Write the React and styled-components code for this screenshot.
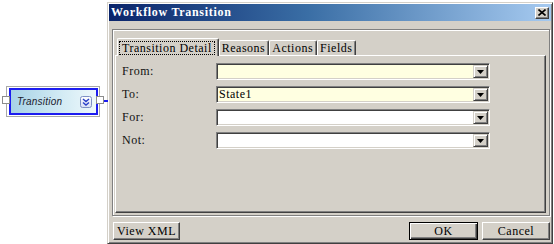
import React from "react";
import styled, { createGlobalStyle, css } from "styled-components";

const GlobalStyle = createGlobalStyle`
  html, body {
    margin: 0;
    padding: 0;
    background: #fff;
  }
  body {
    width: 554px;
    height: 244px;
    overflow: hidden;
    font-family: "Liberation Serif", "Times New Roman", serif;
    color: #000;
  }
`;

const uiText = css`
  font-family: "Liberation Serif", "Times New Roman", serif;
  font-size: 12px;
  letter-spacing: 0.5px;
`;

const Page = styled.div`
  display: flex;
  align-items: flex-start;
  width: 554px;
  height: 244px;
`;

/* ---------- workflow node on the canvas ---------- */

const NodeArea = styled.div`
  width: 107px;
  flex: none;
  box-sizing: border-box;
  padding: 86px 0 0 6px;
`;

const Node = styled.div`
  position: relative;
  width: 94px;
  height: 31px;
  box-sizing: border-box;
  border: 1px solid #a9a9a9;
  background: #fff;
  padding: 1px 1px 1px 2px;
`;

const NodeBody = styled.div`
  display: flex;
  align-items: center;
  justify-content: space-between;
  height: 100%;
  box-sizing: border-box;
  border: 2px solid #1c1cf0;
  background: linear-gradient(to right, #a7d2e6 0%, #d3ebf4 60%, #eef8fb 100%);
  padding: 0 4px 0 6px;
`;

const NodeLabel = styled.span`
  font-family: "Liberation Sans", Arial, sans-serif;
  font-style: italic;
  font-size: 10px;
  color: #1a1a2e;
  letter-spacing: 0.2px;
`;

const Port = styled.div`
  position: absolute;
  top: 9px;
  width: 6px;
  height: 6px;
  border: 1px solid #8c8c8c;
  background: #fff;
  ${(p) =>
    p.side === "left"
      ? css`
          left: -5px;
        `
      : css`
          right: -5px;
        `}
`;

const Wire = styled.div`
  position: absolute;
  top: 13px;
  right: -9px;
  width: 4px;
  height: 2px;
  background: #1c1cf0;
`;

const Expand = () => (
  <svg width="12" height="12" viewBox="0 0 12 12">
    <defs>
      <linearGradient id="exg" x1="0" y1="0" x2="0" y2="1">
        <stop offset="0" stopColor="#ffffff" />
        <stop offset="1" stopColor="#d8e0f4" />
      </linearGradient>
    </defs>
    <rect x="0.5" y="0.5" width="11" height="11" rx="2" fill="url(#exg)" stroke="#7d8fc4" />
    <path d="M3 3 L6 5.5 L9 3 M3 6.5 L6 9 L9 6.5" fill="none" stroke="#2a3fc8" strokeWidth="1.4" />
  </svg>
);

/* ---------- dialog window ---------- */

const Dialog = styled.div`
  margin-top: 2px;
  width: 446px;
  height: 242px;
  flex: none;
  box-sizing: border-box;
  background: #d4d0c8;
  border: 1px solid;
  border-color: #d4d0c8 #404040 #404040 #d4d0c8;
  box-shadow: inset 1px 1px #fff, inset -1px -1px #808080;
  padding: 1px;
  display: flex;
  flex-direction: column;
`;

const TitleBar = styled.div`
  height: 17px;
  flex: none;
  display: flex;
  align-items: center;
  justify-content: space-between;
  padding: 0 2px 0 2px;
  background: linear-gradient(to right, #0a246a 0%, #3a6ea5 45%, #a6caf0 100%);
`;

const Title = styled.span`
  ${uiText};
  color: #fff;
  font-weight: bold;
  letter-spacing: 0.7px;
  line-height: 17px;
`;

const CloseButton = styled.div`
  width: 14px;
  height: 12px;
  box-sizing: border-box;
  display: flex;
  align-items: center;
  justify-content: center;
  background: #d4d0c8;
  border: 1px solid;
  border-color: #fff #404040 #404040 #fff;
  box-shadow: inset -1px -1px #808080;
`;

const GroupBox = styled.div`
  flex: 1;
  margin: 8px 1px 0 3px;
  box-sizing: border-box;
  border: 1px solid #808080;
  box-shadow: inset 1px 1px #fff, 1px 1px #fff;
  padding: 8px 3px 2px 2px;
  display: flex;
  flex-direction: column;
`;

const TabRow = styled.div`
  display: flex;
  align-items: flex-end;
  height: 17px;
  padding-left: 2px;
  position: relative;
  z-index: 1;
`;

const Tab = styled.div`
  ${uiText};
  box-sizing: border-box;
  white-space: nowrap;
  display: flex;
  align-items: center;
  background: #d4d0c8;
  border-top: 1px solid #fff;
  border-left: 1px solid #fff;
  border-right: 1px solid #404040;
  box-shadow: inset -1px 0 #808080;
  border-radius: 2px 2px 0 0;
  ${(p) =>
    p.active
      ? css`
          height: 18px;
          margin-bottom: -1px;
          padding: 0 4px 0 2px;
        `
      : css`
          height: 15px;
          padding: 0 3px 0 2px;
        `}
`;

const Focus = styled.span`
  outline: 1px dotted #000;
  outline-offset: 0;
  padding: 0 2px 0 2px;
  line-height: 12px;
`;

const TabPanel = styled.div`
  flex: 1;
  box-sizing: border-box;
  border: 1px solid;
  border-color: #fff #404040 #404040 #fff;
  box-shadow: inset -1px -1px #808080;
  padding: 7px 0 0 6px;
`;

const Form = styled.div`
  display: grid;
  grid-template-columns: 94px 274px;
  row-gap: 6px;
  align-items: center;
`;

const Label = styled.span`
  ${uiText};
  color: #111;
`;

const Combo = styled.div`
  height: 17px;
  box-sizing: border-box;
  display: flex;
  align-items: stretch;
  border: 1px solid;
  border-color: #808080 #fff #fff #808080;
  box-shadow: inset 1px 1px #404040, inset -1px -1px #d4d0c8;
  padding: 1px;
  background: ${(p) => (p.highlight ? "#ffffe1" : "#fff")};
`;

const ComboText = styled.span`
  ${uiText};
  flex: 1;
  padding-left: 1px;
  line-height: 13px;
`;

const DropButton = styled.div`
  width: 15px;
  box-sizing: border-box;
  display: flex;
  align-items: center;
  justify-content: center;
  background: #d4d0c8;
  border: 1px solid;
  border-color: #d4d0c8 #404040 #404040 #d4d0c8;
  box-shadow: inset 1px 1px #fff, inset -1px -1px #808080;
`;

const ButtonRow = styled.div`
  flex: none;
  display: flex;
  align-items: center;
  height: 18px;
  margin: 6px 1px 2px 4px;
  gap: 4px;
`;

const Spacer = styled.div`
  flex: 1;
`;

const Button = styled.div`
  ${uiText};
  width: ${(p) => p.w}px;
  height: 18px;
  box-sizing: border-box;
  display: flex;
  align-items: center;
  justify-content: center;
  background: #d4d0c8;
  border: 1px solid;
  border-color: #fff #404040 #404040 #fff;
  box-shadow: inset -1px -1px #808080;
  ${(p) =>
    p.primary &&
    css`
      border: 1px solid #000;
      box-shadow: inset 1px 1px #fff, inset -1px -1px #404040, inset -2px -2px #808080;
    `}
`;

const Arrow = () => (
  <svg width="7" height="4" viewBox="0 0 7 4">
    <path d="M0 0 H7 L3.5 4 Z" fill="#000" />
  </svg>
);

const CloseIcon = () => (
  <svg width="8" height="7" viewBox="0 0 8 7">
    <path d="M0.5 0.5 L7.5 6.5 M7.5 0.5 L0.5 6.5" stroke="#000" strokeWidth="1.6" />
  </svg>
);

const fields = [
  { label: "From:", value: "", highlight: true },
  { label: "To:", value: "State1", highlight: true },
  { label: "For:", value: "" },
  { label: "Not:", value: "" },
];

const tabs = ["Transition Detail", "Reasons", "Actions", "Fields"];

export default function App() {
  return (
    <>
      <GlobalStyle />
      <Page>
        <NodeArea>
          <Node>
            <Port side="left" />
            <NodeBody>
              <NodeLabel>Transition</NodeLabel>
              <Expand />
            </NodeBody>
            <Port side="right" />
            <Wire />
          </Node>
        </NodeArea>

        <Dialog>
          <TitleBar>
            <Title>Workflow Transition</Title>
            <CloseButton>
              <CloseIcon />
            </CloseButton>
          </TitleBar>

          <GroupBox>
            <TabRow>
              {tabs.map((t, i) => (
                <Tab key={t} active={i === 0}>
                  {i === 0 ? <Focus>{t}</Focus> : t}
                </Tab>
              ))}
            </TabRow>
            <TabPanel>
              <Form>
                {fields.map((f) => (
                  <React.Fragment key={f.label}>
                    <Label>{f.label}</Label>
                    <Combo highlight={f.highlight}>
                      <ComboText>{f.value}</ComboText>
                      <DropButton>
                        <Arrow />
                      </DropButton>
                    </Combo>
                  </React.Fragment>
                ))}
              </Form>
            </TabPanel>
          </GroupBox>

          <ButtonRow>
            <Button w={67}>View XML</Button>
            <Spacer />
            <Button w={69} primary>
              OK
            </Button>
            <Button w={68}>Cancel</Button>
          </ButtonRow>
        </Dialog>
      </Page>
    </>
  );
}
